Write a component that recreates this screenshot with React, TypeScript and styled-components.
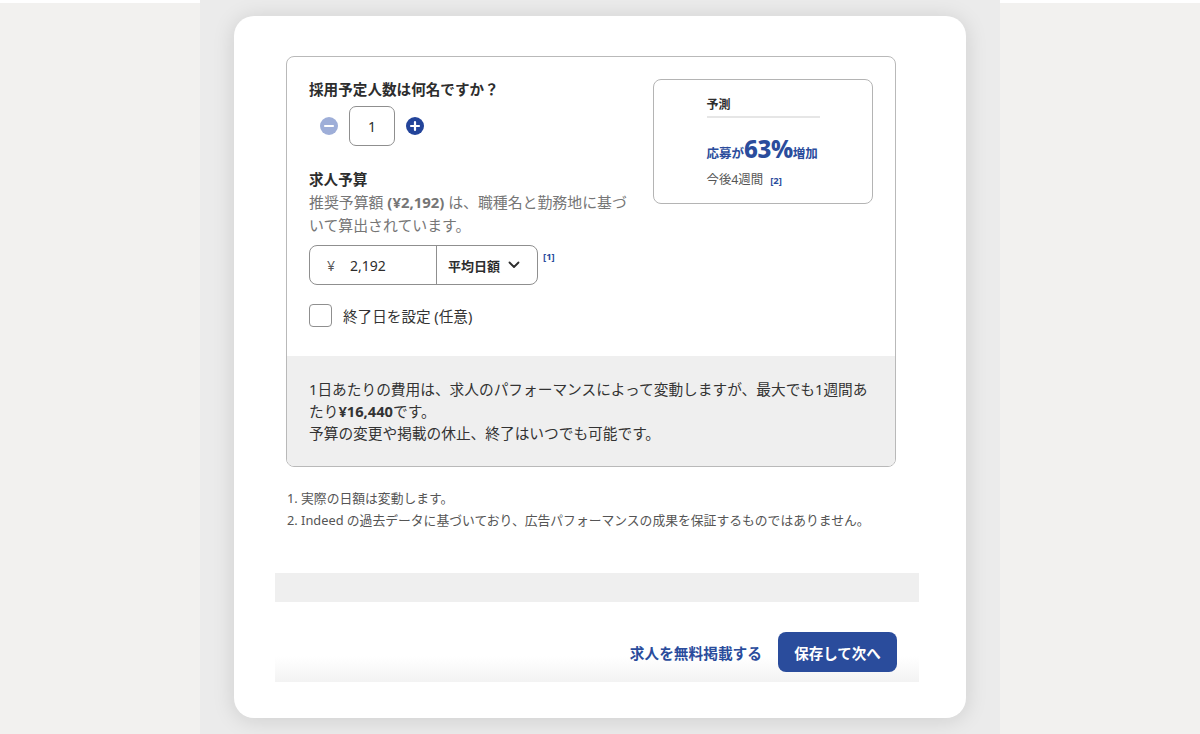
import styled, { createGlobalStyle } from 'styled-components';

const GlobalStyle = createGlobalStyle`
  html, body { margin: 0; padding: 0; }
  body {
    background: #f2f1ef;
    font-family: 'Noto Sans', 'Noto Sans CJK JP', sans-serif;
    color: #2d2d2d;
  }
`;

const BLUE = '#2a4c9c';

const Page = styled.div`
  display: flex;
  height: 734px;
  overflow: hidden;
`;

const Side = styled.div`
  flex: 1;
  border-top: 3px solid #ffffff;
  background: #f2f1ef;
`;

const Frame = styled.div`
  width: 800px;
  background: #ebebeb;
  padding: 16px 34px 0;
  box-sizing: border-box;
`;

const Card = styled.div`
  width: 732px;
  height: 702px;
  box-sizing: border-box;
  background: #fff;
  border-radius: 20px;
  box-shadow: 0 2px 22px rgba(0, 0, 0, 0.13);
  padding: 40px 47px 0 41px;
  display: flex;
  flex-direction: column;
`;

const FormArea = styled.div`
  padding-left: 11px;
`;

const Box = styled.div`
  width: 610px;
  box-sizing: border-box;
  border: 1px solid #b9b9b9;
  border-radius: 8px;
  overflow: hidden;
`;

const TopSection = styled.div`
  display: flex;
  gap: 12px;
  padding: 22px 22px 29px;
`;

const LeftCol = styled.div`
  flex: 1;
  display: flex;
  flex-direction: column;
`;

const Heading = styled.div<{ $mt?: number }>`
  font-size: 14.6px;
  font-weight: 700;
  line-height: 20px;
  margin-top: ${(p) => p.$mt ?? 0}px;
`;

const Stepper = styled.div`
  display: flex;
  align-items: center;
  margin-top: 7px;
`;

const StepButton = styled.button`
  width: 40px;
  height: 40px;
  border: none;
  background: none;
  padding: 0;
  display: flex;
  align-items: center;
  justify-content: center;
`;

const Count = styled.div`
  width: 46px;
  height: 40px;
  box-sizing: border-box;
  border: 1px solid #8f8f8f;
  border-radius: 7px;
  display: flex;
  align-items: center;
  justify-content: center;
  font-size: 14px;
`;

const Desc = styled.div`
  font-size: 14.9px;
  line-height: 23px;
  color: #767676;
  margin-top: 2px;
  white-space: nowrap;

  b { font-weight: 700; }
`;

const BudgetRow = styled.div`
  display: flex;
  align-items: flex-start;
  margin-top: 8px;
`;

const Group = styled.div`
  display: flex;
  width: 229px;
  height: 40px;
  box-sizing: border-box;
  border: 1px solid #8f8f8f;
  border-radius: 8px;
`;

const Amount = styled.div`
  width: 127px;
  display: flex;
  align-items: center;
  padding-left: 17px;
  box-sizing: border-box;
  font-size: 14px;
  border-right: 1px solid #8f8f8f;

  span { color: #555; margin-right: 15px; }
`;

const Period = styled.div`
  flex: 1;
  display: flex;
  align-items: center;
  gap: 8px;
  padding-left: 11px;
  font-size: 13px;
  font-weight: 700;
`;

const Ref = styled.span`
  font-size: 9.5px;
  font-weight: 700;
  color: ${BLUE};
  margin-left: 5px;
  margin-top: 5px;
`;

const CheckRow = styled.label`
  display: flex;
  align-items: center;
  gap: 11px;
  margin-top: 19px;
  font-size: 14.6px;
  color: #333;
`;

const Check = styled.span`
  width: 23px;
  height: 23px;
  box-sizing: border-box;
  border: 1px solid #8f8f8f;
  border-radius: 4px;
`;

const Forecast = styled.div`
  width: 220px;
  height: 125px;
  box-sizing: border-box;
  border: 1px solid #b4b4b4;
  border-radius: 8px;
  display: flex;
  justify-content: center;
`;

const ForecastInner = styled.div`
  width: 113px;
  padding-top: 16px;
`;

const ForecastTitle = styled.div`
  font-size: 12px;
  font-weight: 700;
  line-height: 18px;
  padding-bottom: 2px;
  border-bottom: 2px solid #e6e6e6;
`;

const Increase = styled.div`
  color: ${BLUE};
  font-weight: 700;
  font-size: 12.5px;
  line-height: 30px;
  margin-top: 16px;
  white-space: nowrap;

  em { font-style: normal; font-size: 24px; font-weight: 800; letter-spacing: -0.4px; }
`;

const Period4w = styled.div`
  font-size: 12.4px;
  line-height: 18px;
  color: #555;
  margin-top: 2px;

  span { color: ${BLUE}; font-size: 9.5px; font-weight: 700; margin-left: 7px; }
`;

const Notice = styled.div`
  background: #efefef;
  padding: 22px 22px 22px;
  font-size: 14.7px;
  line-height: 22px;
  color: #333;
  white-space: nowrap;

  b { font-weight: 700; }
`;

const Footnotes = styled.div`
  margin-top: 20px;
  padding-left: 1px;
  font-size: 12.8px;
  line-height: 22px;
  color: #555;
`;

const Band = styled.div`
  height: 29px;
  background: #efefef;
  margin-top: 42px;
`;

const Footer = styled.div`
  height: 80px;
  box-sizing: border-box;
  padding: 30px 22px 10px;
  display: flex;
  justify-content: flex-end;
  align-items: flex-start;
  gap: 16px;
  background: linear-gradient(to bottom, #fff 0%, #fff 68%, #f3f3f3 100%);
`;

const LinkButton = styled.a`
  height: 40px;
  display: flex;
  align-items: center;
  color: ${BLUE};
  font-weight: 700;
  font-size: 14.7px;
  text-decoration: none;
`;

const Primary = styled.button`
  width: 119px;
  height: 40px;
  border: none;
  border-radius: 8px;
  background: ${BLUE};
  color: #fff;
  font-family: inherit;
  font-weight: 700;
  font-size: 14.5px;
`;

function CircleIcon({ kind }: { kind: 'minus' | 'plus' }) {
  const fill = kind === 'minus' ? '#9eaed8' : '#23449a';
  return (
    <svg width="18" height="18" viewBox="0 0 18 18">
      <circle cx="9" cy="9" r="9" fill={fill} />
      <path d="M5 9h8" stroke="#fff" strokeWidth="2.2" strokeLinecap="round" />
      {kind === 'plus' && <path d="M9 5v8" stroke="#fff" strokeWidth="2.2" strokeLinecap="round" />}
    </svg>
  );
}

function Chevron() {
  return (
    <svg width="12" height="8" viewBox="0 0 12 8">
      <path d="M1.5 1.5 6 6l4.5-4.5" fill="none" stroke="#2d2d2d" strokeWidth="1.8" strokeLinecap="round" strokeLinejoin="round" />
    </svg>
  );
}

export default function App() {
  return (
    <>
      <GlobalStyle />
      <Page>
        <Side />
        <Frame>
          <Card>
            <FormArea>
              <Box>
                <TopSection>
                  <LeftCol>
                    <Heading>採用予定人数は何名ですか？</Heading>
                    <Stepper>
                      <StepButton aria-label="減らす"><CircleIcon kind="minus" /></StepButton>
                      <Count>1</Count>
                      <StepButton aria-label="増やす"><CircleIcon kind="plus" /></StepButton>
                    </Stepper>

                    <Heading $mt={23}>求人予算</Heading>
                    <Desc>
                      推奨予算額 <b>(¥2,192)</b> は、職種名と勤務地に基づ<br />
                      いて算出されています。
                    </Desc>

                    <BudgetRow>
                      <Group>
                        <Amount><span>¥</span>2,192</Amount>
                        <Period>平均日額 <Chevron /></Period>
                      </Group>
                      <Ref>[1]</Ref>
                    </BudgetRow>

                    <CheckRow>
                      <Check />
                      終了日を設定 (任意)
                    </CheckRow>
                  </LeftCol>

                  <Forecast>
                    <ForecastInner>
                      <ForecastTitle>予測</ForecastTitle>
                      <Increase>応募が<em>63%</em>増加</Increase>
                      <Period4w>今後4週間<span>[2]</span></Period4w>
                    </ForecastInner>
                  </Forecast>
                </TopSection>

                <Notice>
                  1日あたりの費用は、求人のパフォーマンスによって変動しますが、最大でも1週間あ<br />
                  たり<b>¥16,440</b>です。<br />
                  予算の変更や掲載の休止、終了はいつでも可能です。
                </Notice>
              </Box>

              <Footnotes>
                1. 実際の日額は変動します。<br />
                2. Indeed の過去データに基づいており、広告パフォーマンスの成果を保証するものではありません。
              </Footnotes>
            </FormArea>

            <Band />
            <Footer>
              <LinkButton href="#">求人を無料掲載する</LinkButton>
              <Primary>保存して次へ</Primary>
            </Footer>
          </Card>
        </Frame>
        <Side />
      </Page>
    </>
  );
}
